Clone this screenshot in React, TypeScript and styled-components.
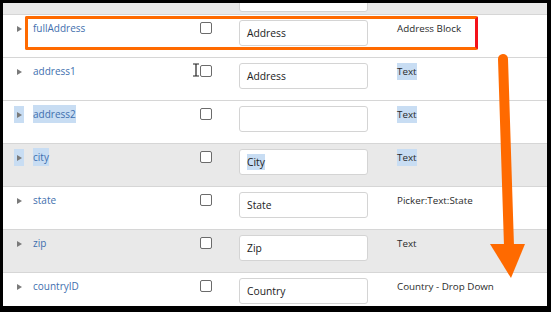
import React from "react";
import styled, { createGlobalStyle } from "styled-components";

type Field = {
  name: string;
  value: string;
  type: string;
  shaded?: boolean;
  nameSelected?: boolean;
  typeSelected?: boolean;
  valueSelected?: boolean;
};

const fields: Field[] = [
  { name: "fullAddress", value: "Address", type: "Address Block" },
  { name: "address1", value: "Address", type: "Text", typeSelected: true },
  { name: "address2", value: "", type: "Text", nameSelected: true, typeSelected: true },
  { name: "city", value: "City", type: "Text", shaded: true, nameSelected: true, typeSelected: true, valueSelected: true },
  { name: "state", value: "State", type: "Picker:Text:State" },
  { name: "zip", value: "Zip", type: "Text", shaded: true },
  { name: "countryID", value: "Country", type: "Country - Drop Down" },
];

const App = () => {
  return (
    <>
      <GlobalStyle />
      <Frame>
        <Table>
          <ClippedRow>
            <span />
            <span />
            <span />
            <PartialInput />
          </ClippedRow>
          {fields.map((f, i) => (
            <Row key={f.name} $shaded={f.shaded}>
              <Expander $selected={f.nameSelected}>
                <Triangle />
              </Expander>
              <NameCell>
                <Name $selected={f.nameSelected}>{f.name}</Name>
              </NameCell>
              <CheckCell>
                <Checkbox />
              </CheckCell>
              <InputCell>
                <InputBox>
                  <InputText $selected={f.valueSelected}>{f.value}</InputText>
                </InputBox>
              </InputCell>
              <TypeCell>
                <TypeLabel $selected={f.typeSelected}>{f.type}</TypeLabel>
              </TypeCell>
              {i === 0 && <Highlight />}
              {i === 1 && (
                <Cursor width="8" height="14" viewBox="0 0 8 14">
                  <path d="M1 1h6M4 1v12M1 13h6" stroke="#222" strokeWidth="1.2" fill="none" />
                </Cursor>
              )}
            </Row>
          ))}
        </Table>
        <Arrow width="551" height="312" viewBox="0 0 551 312">
          <line x1="503" y1="59" x2="509" y2="246" stroke="#ff6a00" strokeWidth="10" strokeLinecap="round" />
          <polygon points="490,244 525,244 511,278" fill="#ff6a00" />
        </Arrow>
      </Frame>
    </>
  );
};

export default App;

const GlobalStyle = createGlobalStyle`
  html, body {
    margin: 0;
    padding: 0;
    background: #000;
  }
  body {
    font-family: "Open Sans", "Liberation Sans", sans-serif;
  }
`;

const Frame = styled.div`
  position: relative;
  width: 551px;
  height: 312px;
  box-sizing: border-box;
  border-style: solid;
  border-color: #000;
  border-width: 3px 4px 6px 3px;
  background: #fff;
  overflow: hidden;
`;

const Table = styled.div`
  display: flex;
  flex-direction: column;
`;

const RowGrid = styled.div`
  display: grid;
  grid-template-columns: 19px 167px 39px 158px 1fr;
  padding-left: 11px;
  box-sizing: border-box;
`;

const ClippedRow = styled(RowGrid)`
  height: 12px;
  background: #e9e9e9;
  border-bottom: 1px solid #d6d6d6;
  overflow: hidden;
  align-items: start;
`;

const Row = styled(RowGrid)<{ $shaded?: boolean }>`
  position: relative;
  height: 43px;
  background: ${(p) => (p.$shaded ? "#e9e9e9" : "#fff")};
  border-bottom: 1px solid #d6d6d6;
  flex-shrink: 0;
`;

const Expander = styled.div<{ $selected?: boolean }>`
  margin-top: 5px;
  width: 10px;
  height: 17px;
  display: flex;
  align-items: center;
  justify-content: center;
  background: ${(p) => (p.$selected ? "#c8ddf3" : "transparent")};
  align-self: start;
`;

const Triangle = styled.span`
  width: 0;
  height: 0;
  border-top: 3.5px solid transparent;
  border-bottom: 3.5px solid transparent;
  border-left: 5px solid #7a7a7a;
`;

const NameCell = styled.div`
  padding-top: 5px;
  font-size: 10px;
  line-height: 16px;
`;

const Name = styled.span<{ $selected?: boolean }>`
  color: #3f6fae;
  padding: 2px 0;
  background: ${(p) => (p.$selected ? "#c8ddf3" : "transparent")};
`;

const CheckCell = styled.div`
  padding-top: 7px;
`;

const Checkbox = styled.div`
  width: 10px;
  height: 10px;
  border: 1.5px solid #6b6b6b;
  border-radius: 2px;
  background: #fff;
`;

const InputCell = styled.div`
  padding-top: 5px;
`;

const PartialInput = styled.div`
  margin-top: -17px;
  width: 129px;
  height: 26px;
  box-sizing: border-box;
  border: 1.5px solid #d4d4d4;
  border-radius: 3px;
  background: #fff;
`;

const InputBox = styled.div`
  width: 129px;
  height: 26px;
  box-sizing: border-box;
  border: 1.5px solid #d4d4d4;
  border-radius: 3px;
  background: #fff;
  display: flex;
  align-items: center;
  padding-left: 7px;
  font-size: 10.3px;
  line-height: 16px;
`;

const InputText = styled.span<{ $selected?: boolean }>`
  color: #222;
  background: ${(p) => (p.$selected ? "#c8ddf3" : "transparent")};
`;

const TypeCell = styled.div`
  padding-top: 6px;
  font-size: 9.8px;
  line-height: 16px;
`;

const TypeLabel = styled.span<{ $selected?: boolean }>`
  color: #2b2b2b;
  padding: 2px 0;
  background: ${(p) => (p.$selected ? "#c8ddf3" : "transparent")};
`;

const Highlight = styled.div`
  position: absolute;
  left: 22px;
  top: 1px;
  width: 453px;
  height: 34px;
  box-sizing: border-box;
  border: 3px solid #ff6a00;
  border-right-color: #f4121a;
  border-radius: 2px;
  pointer-events: none;
`;

const Cursor = styled.svg`
  position: absolute;
  left: 189px;
  top: 5px;
`;

const Arrow = styled.svg`
  position: absolute;
  left: -3px;
  top: -3px;
  pointer-events: none;
`;
